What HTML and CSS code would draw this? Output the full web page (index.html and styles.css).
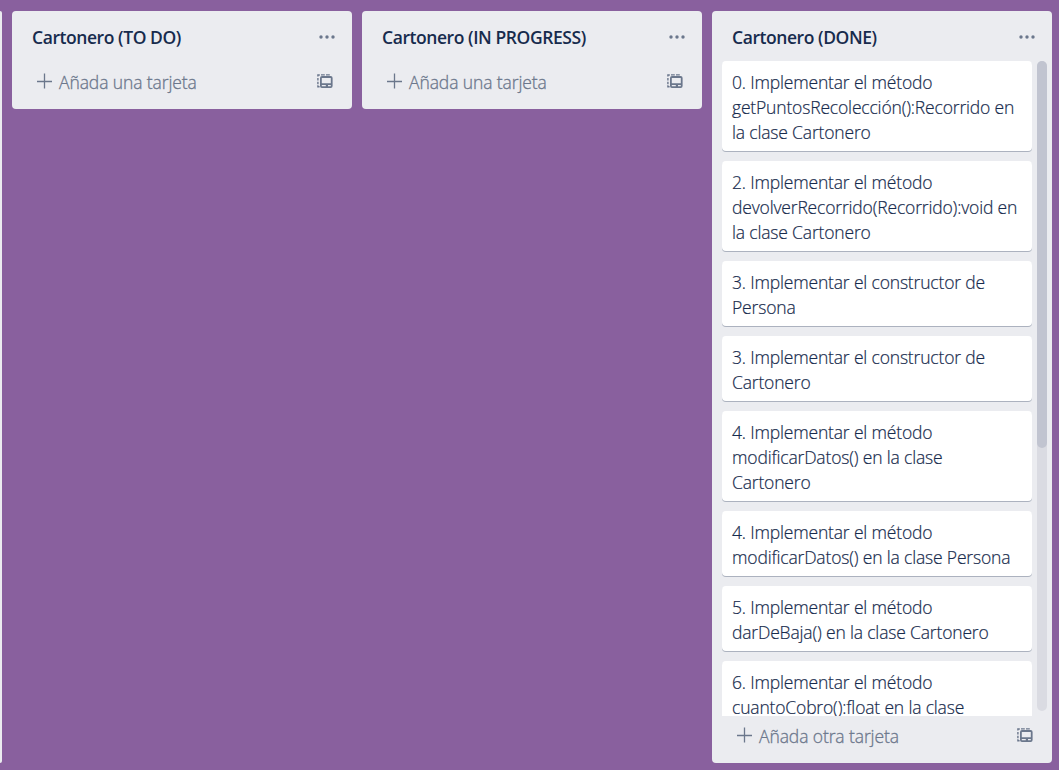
FILE: index.html
```html
<!DOCTYPE html>
<html lang="es">
<head>
<meta charset="utf-8">
<title>Cartonero</title>
<link rel="stylesheet" href="styles.css">
</head>
<body>
<svg class="defs" aria-hidden="true">
  <symbol id="dots" viewBox="0 0 16 4"><circle cx="2" cy="2" r="1.7"/><circle cx="8" cy="2" r="1.7"/><circle cx="14" cy="2" r="1.7"/></symbol>
  <symbol id="plus" viewBox="0 0 16 16"><path d="M7.5 .5v15M0 8.5h15" fill="none" stroke="currentColor" stroke-width="1.3"/></symbol>
  <symbol id="template" viewBox="0 0 16 15"><path fill-rule="evenodd" d="M5 2h8.6a2 2 0 0 1 2 2v8a2 2 0 0 1-2 2H5a2 2 0 0 1-2-2V4a2 2 0 0 1 2-2zM4.8 4v5.2h9V4zM4.8 11v1.2h4V11zM11 11v1.2h2.8V11z"/><path d="M.2 2.6V.3h2.6v1.4H1.6v.9zM4 .3h3.8v1.2H4zM9 .3h3.8v1.2H9zM.2 4h1.4v2.6H.2zM.2 7.8h1.4v2.4H.2zM.2 11.2h1.4v.8h1v1.4H.2z"/></symbol>
</svg>
<main class="board">
  <section class="list list-previous"></section>
  <section class="list">
    <header class="list-header"><h2>Cartonero (TO DO)</h2><svg class="menu"><use href="#dots"/></svg></header>
    <footer class="list-footer"><svg class="plus"><use href="#plus"/></svg><span class="add">Añada una tarjeta</span><svg class="template"><use href="#template"/></svg></footer>
  </section>
  <section class="list">
    <header class="list-header"><h2>Cartonero (IN PROGRESS)</h2><svg class="menu"><use href="#dots"/></svg></header>
    <footer class="list-footer"><svg class="plus"><use href="#plus"/></svg><span class="add">Añada una tarjeta</span><svg class="template"><use href="#template"/></svg></footer>
  </section>
  <section class="list list-done">
    <header class="list-header"><h2>Cartonero (DONE)</h2><svg class="menu"><use href="#dots"/></svg></header>
    <div class="list-body">
      <div class="cards">
        <article class="card">0. Implementar el método<br>getPuntosRecolección():Recorrido en<br>la clase Cartonero</article>
        <article class="card">2. Implementar el método<br>devolverRecorrido(Recorrido):void en<br>la clase Cartonero</article>
        <article class="card">3. Implementar el constructor de<br>Persona</article>
        <article class="card">3. Implementar el constructor de<br>Cartonero</article>
        <article class="card">4. Implementar el método<br>modificarDatos() en la clase<br>Cartonero</article>
        <article class="card">4. Implementar el método<br>modificarDatos() en la clase Persona</article>
        <article class="card">5. Implementar el método<br>darDeBaja() en la clase Cartonero</article>
        <article class="card">6. Implementar el método<br>cuantoCobro():float en la clase</article>
      </div>
      <div class="track"><div class="thumb"></div></div>
    </div>
    <footer class="list-footer"><svg class="plus"><use href="#plus"/></svg><span class="add">Añada otra tarjeta</span><svg class="template"><use href="#template"/></svg></footer>
  </section>
</main>
</body>
</html>
```
FILE: styles.css
```css
* { box-sizing: border-box; }
body { margin: 0; background: #89609e; color: #172b4d; font-family: "Open Sans", "Noto Sans", sans-serif; }
.defs { display: none; }
.board { display: flex; align-items: flex-start; gap: 10px; height: 770px; padding-top: 11px; }
.list { flex: none; width: 340px; border-radius: 4px; background: #ebecf0; }
.list-previous { width: 2px; height: 752px; border-radius: 0 4px 4px 0; }
.list-done { height: 752px; display: flex; flex-direction: column; }
.list-header { display: flex; justify-content: space-between; height: 50px; padding: 13px 17px 0 20px; }
.list-header h2 { margin: 0; font-size: 17.5px; line-height: 26px; font-weight: 600; letter-spacing: -0.43px; white-space: nowrap; }
.menu { width: 16px; height: 4px; margin-top: 11px; fill: #6b778c; }
.list-footer { display: flex; height: 48px; padding: 9px 19px 0 25px; color: #6b778c; }
.plus { width: 16px; height: 16px; margin-top: 3px; }
.add { flex: 1; margin-left: 6px; font-size: 17.5px; line-height: 25px; font-weight: 300; letter-spacing: -0.1px; -webkit-text-stroke: .3px currentColor; white-space: nowrap; }
.template { width: 16px; height: 15px; margin-top: 4px; fill: #6b778c; }
.list-body { display: flex; gap: 5px; height: 655px; padding-left: 10px; }
.list-done .list-footer { padding-top: 8px; }
.cards { width: 310px; overflow: hidden; }
.card { margin-bottom: 10px; padding: 9px 10px 6px; border-radius: 4px; background: #fff; box-shadow: 0 1px 0 rgba(9, 30, 66, .28); font-size: 17.5px; line-height: 25px; font-weight: 300; letter-spacing: -0.17px; -webkit-text-stroke: .2px currentColor; white-space: nowrap; }
.track { width: 10px; height: 650px; border-radius: 5px; background: #dadbe2; }
.thumb { height: 387px; border-radius: 5px; background: #c1c4d0; }
```
